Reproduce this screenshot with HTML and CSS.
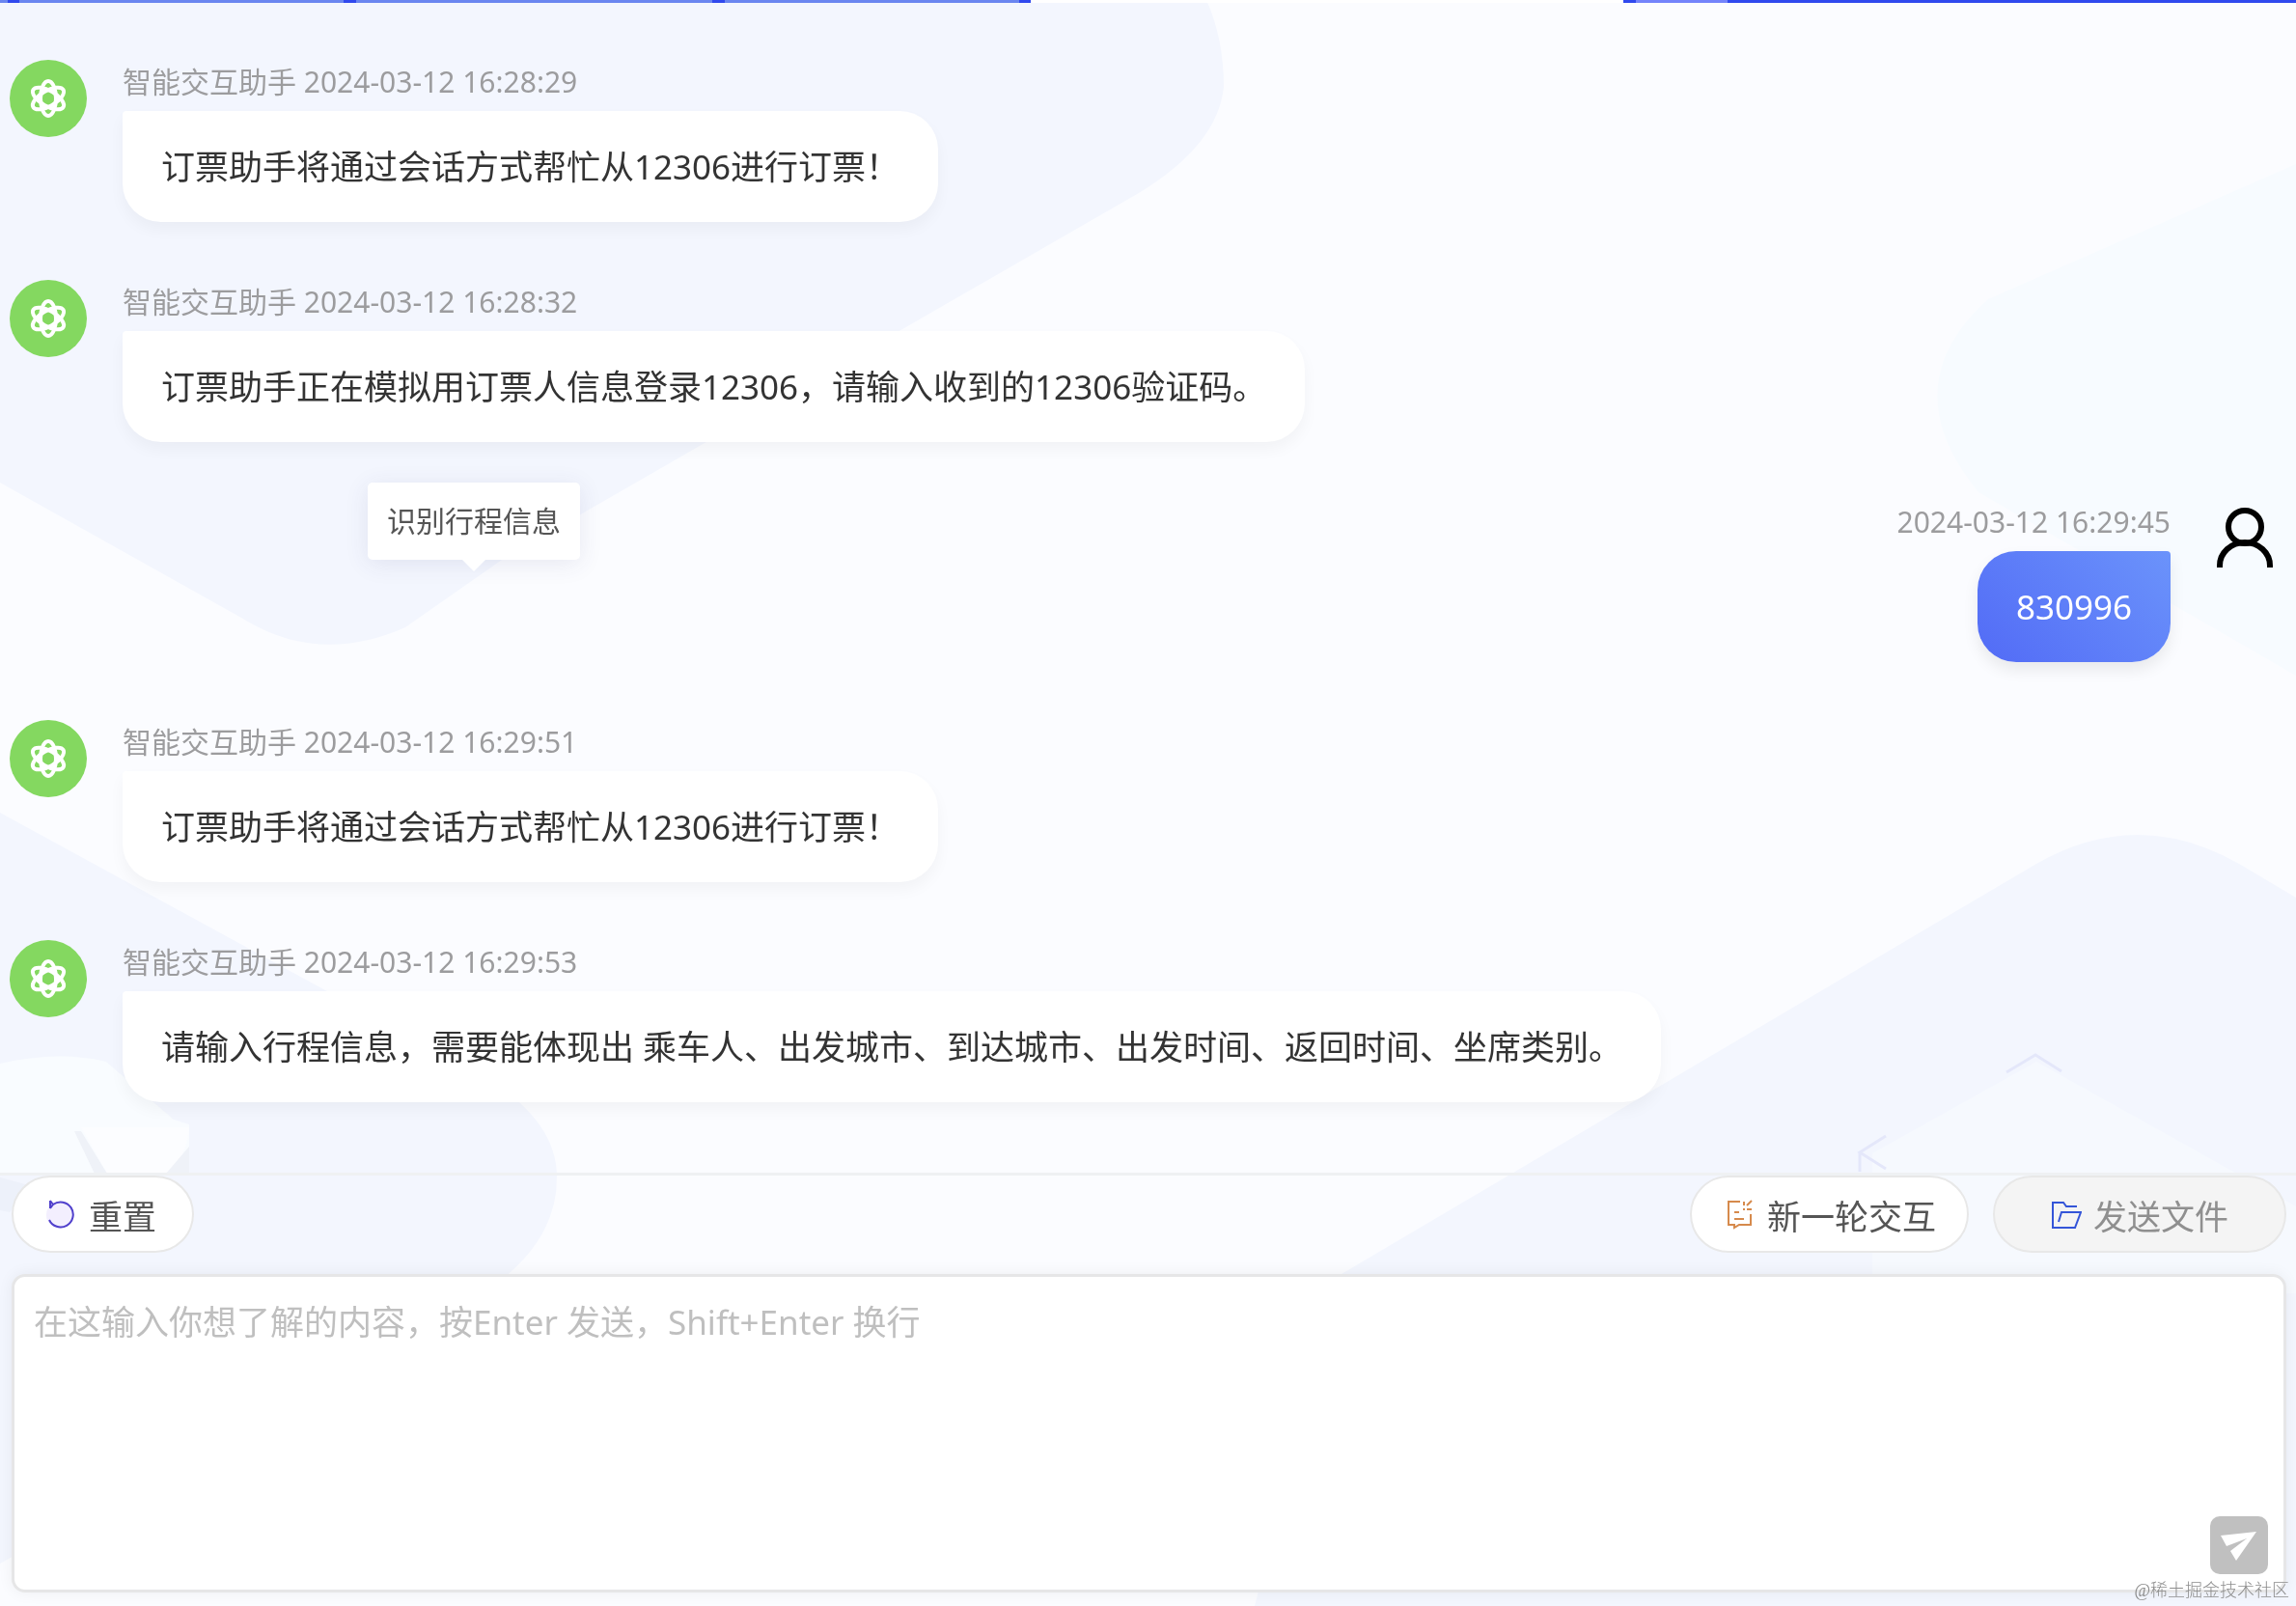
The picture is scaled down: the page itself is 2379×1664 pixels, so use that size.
FILE: index.html
```html
<!DOCTYPE html>
<html lang="zh-CN">
<head>
    <meta charset="UTF-8">
    <meta name="viewport" content="width=device-width, initial-scale=1.0">
    <title>智能交互助手</title>
    <link rel="stylesheet" href="styles.css">
</head>
<body>
    <!-- 背景装饰 -->
    <svg class="page-bg" viewBox="0 0 2379 1664" preserveAspectRatio="none" aria-hidden="true">
        <path fill="#f3f6fe" d="M0 0H1250Q1268 40 1268 90Q1262 150 1180 200L520 580L420 650Q330 690 250 640L0 500Z"/>
        <path fill="#f7fbff" d="M2379 170L2060 310Q1960 400 2050 510L2379 700Z"/>
        <path fill="#f3f6fe" d="M0 842L500 1115Q577 1160 577 1220Q577 1290 500 1340L0 1620Z"/>
        <path fill="#f3f6fe" d="M1390 1320L2110 895Q2215 835 2320 895L2379 930V1664H1300Z"/>
        <path fill="#f6f9fe" d="M2110 1100L2379 1250V1340H1940V1195Z"/>
        <path fill="none" stroke="#e4e7fa" stroke-width="3" d="M2079 1111L2109 1093L2136 1110M1954 1177L1927 1194L1954 1211M1927 1194V1214"/>
        <path fill="#f9fcff" d="M0 1102Q60 1088 110 1100L180 1160L196 1165V1216H0Z"/>
        <path fill="#fcfdff" d="M84 1168H196Q194 1200 172 1216H111Z"/>
        <path fill="#eff2f8" d="M77 1172L98 1216H111L84 1172ZM196 1188V1216H172Z"/>
        <path fill="#edf1fa" d="M0 1220L30 1228L10 1256L0 1254Z"/>
    </svg>

    <div class="chat-page">
        <div class="top-strip">
            <i class="tab"></i><i class="line"></i><i class="tab"></i><i class="line"></i><i class="tab"></i><i class="line"></i><i class="tab"></i><i class="line"></i><i class="active"></i><i class="line"></i><i class="tab light"></i><i class="line"></i>
        </div>

        <svg width="0" height="0" class="symbols" aria-hidden="true">
            <symbol id="bot" viewBox="0 0 80 80">
                <g fill="none" stroke="#fff" stroke-width="4">
                    <ellipse cx="40" cy="40" rx="8" ry="18"/>
                    <ellipse cx="40" cy="40" rx="8" ry="18" transform="rotate(60 40 40)"/>
                    <ellipse cx="40" cy="40" rx="8" ry="18" transform="rotate(120 40 40)"/>
                </g>
            </symbol>
        </svg>

        <main class="messages">
            <div class="message">
                <svg class="avatar bot"><use href="#bot"/></svg>
                <div class="content">
                    <div class="meta">智能交互助手 2024-03-12 16:28:29</div>
                    <div class="bubble">订票助手将通过会话方式帮忙从12306进行订票！</div>
                </div>
            </div>
            <div class="message">
                <svg class="avatar bot"><use href="#bot"/></svg>
                <div class="content">
                    <div class="meta">智能交互助手 2024-03-12 16:28:32</div>
                    <div class="bubble">订票助手正在模拟用订票人信息登录12306，请输入收到的12306验证码。</div>
                </div>
            </div>
            <div class="message user">
                <svg class="avatar" viewBox="0 0 80 80">
                    <g fill="none" stroke="#000" stroke-width="6">
                        <circle cx="40" cy="28" r="17"/>
                        <path d="M14 70V68A26 24 0 0 1 66 68V70"/>
                    </g>
                </svg>
                <div class="content">
                    <div class="meta">2024-03-12 16:29:45</div>
                    <div class="bubble">830996</div>
                </div>
                <div class="tooltip" role="tooltip">识别行程信息</div>
            </div>
            <div class="message">
                <svg class="avatar bot"><use href="#bot"/></svg>
                <div class="content">
                    <div class="meta">智能交互助手 2024-03-12 16:29:51</div>
                    <div class="bubble">订票助手将通过会话方式帮忙从12306进行订票！</div>
                </div>
            </div>
            <div class="message">
                <svg class="avatar bot"><use href="#bot"/></svg>
                <div class="content">
                    <div class="meta">智能交互助手 2024-03-12 16:29:53</div>
                    <div class="bubble">请输入行程信息，需要能体现出 乘车人、出发城市、到达城市、出发时间、返回时间、坐席类别。</div>
                </div>
            </div>
        </main>

        <footer class="composer">
            <div class="toolbar">
                <button class="tool-btn reset" type="button">
                    <svg class="icon" viewBox="0 0 32 32">
                        <circle cx="14" cy="17" r="14" fill="#f3effe"/>
                        <path fill="none" stroke="#5040cc" stroke-width="2" d="M4 2V10M4 10L7 6A13 13 0 1 1 3 22M4 2L7 6"/>
                    </svg>
                    重置
                </button>
                <button class="tool-btn push" type="button">
                    <svg class="icon" viewBox="0 0 32 32" fill="none" stroke="#d68a4c" stroke-width="2">
                        <path d="M16 3H4V27H10V30L15 27H27V16M10 14H15M10 21H20M20 3V7M28 2L23 7M23 11H28M20 10V12"/>
                    </svg>
                    新一轮交互
                </button>
                <button class="tool-btn send-file" type="button" disabled>
                    <svg class="icon" viewBox="0 0 32 32" fill="none" stroke="#3455d8" stroke-width="2">
                        <path d="M27 8H16L13 4H2V30H25L31 14H11L8 24"/>
                    </svg>
                    发送文件
                </button>
            </div>
            <div class="input-box">
                <textarea aria-label="输入内容" placeholder="在这输入你想了解的内容，按Enter 发送，Shift+Enter 换行"></textarea>
                <button class="send-btn" type="button" aria-label="发送">
                    <svg viewBox="0 0 60 60"><path fill="#fff" d="M11 20L48 16L27 46L21 36L38 23L17 31Z"/></svg>
                </button>
            </div>
        </footer>
        <div class="watermark">@稀土掘金技术社区</div>
    </div>
</body>
</html>
```
FILE: styles.css
```css
* {
    box-sizing: border-box;
}

body {
    margin: 0;
    background: #fbfcff;
    color: #333;
    font-family: "Noto Sans", "Noto Sans CJK SC", sans-serif;
    font-size: 35px;
}

button,
textarea {
    font: inherit;
}

.page-bg {
    position: fixed;
    inset: 0;
    z-index: -1;
    width: 100%;
    height: 100%;
}

.chat-page {
    position: relative;
    display: flex;
    flex-direction: column;
    min-height: 100vh;
}

/* 顶部标签条 */
.top-strip {
    display: grid;
    grid-template-columns: 8fr 12fr 336fr 13fr 369fr 13fr 305fr 12fr 614fr 13fr 95fr 589fr;
    height: 3px;
}

.tab {
    background: #6a86f0;
}

.tab.light {
    background: #7484fb;
}

.line {
    background: #3049ee;
}

.active {
    background: #fff;
}

.symbols {
    position: absolute;
}

/* 消息列表 */
.messages {
    flex: 1;
    display: flex;
    flex-direction: column;
    gap: 60px;
    padding: 59px 13px 60px 10px;
}

.message {
    position: relative;
    display: flex;
    align-items: flex-start;
    gap: 37px;
}

.message.user {
    flex-direction: row-reverse;
}

.avatar {
    width: 80px;
    height: 80px;
    flex: none;
}

.avatar.bot {
    border-radius: 50%;
    background: #84d860;
}

.content {
    display: flex;
    flex-direction: column;
    align-items: flex-start;
}

.user .content {
    align-items: flex-end;
}

.meta {
    height: 53px;
    line-height: 46px;
    font-size: 30px;
    color: #9c9c9e;
}

.bubble {
    padding: 30px 40px;
    line-height: 55px;
    border-radius: 4px 40px 40px 40px;
    background: #fff;
    box-shadow: 0 8px 16px rgba(0, 0, 0, 0.04);
}

.user .bubble {
    border-radius: 40px 4px 40px 40px;
    background: linear-gradient(45deg, #526bf6, #6b93fb);
    color: #fff;
    box-shadow: 0 8px 16px rgba(0, 0, 0, 0.08);
}

.tooltip {
    position: absolute;
    left: 371px;
    top: -18px;
    padding: 0 20px;
    line-height: 80px;
    font-size: 30px;
    color: #555;
    background: #fff;
    border-radius: 5px;
    box-shadow: 0 4px 24px rgba(60, 60, 120, 0.1);
}

.tooltip::after {
    content: "";
    position: absolute;
    left: 50%;
    top: 100%;
    transform: translateX(-50%);
    border: 12px solid transparent;
    border-top-color: #fff;
    border-bottom: none;
}

/* 底部输入区 */
.composer {
    display: flex;
    flex-direction: column;
    gap: 22px;
    padding: 0 10px 14px 12px;
    border-top: 3px solid #eff1f3;
}

.toolbar {
    display: flex;
    gap: 25px;
}

.tool-btn {
    display: flex;
    align-items: center;
    gap: 12px;
    height: 80px;
    padding: 0 32px 0 34px;
    border: 2px solid #e8e8e8;
    border-radius: 40px;
    background: #fff;
    color: #555;
}

.reset {
    padding-right: 37px;
}

.push {
    margin-left: auto;
}

.send-file {
    padding: 0 58px;
    background: #f4f4f4;
    color: #8f8f8f;
}

.icon {
    width: 32px;
    height: 32px;
}

.input-box {
    position: relative;
    display: flex;
}

textarea {
    flex: 1;
    height: 330px;
    padding: 20px;
    border: 3px solid #e6e6e7;
    border-radius: 14px;
    outline: none;
    resize: none;
    line-height: 54px;
    color: #333;
    background: #fff;
    box-shadow: 0 0 16px rgba(0, 0, 0, 0.06);
}

textarea::placeholder {
    color: #bfbfbf;
    opacity: 1;
}

.send-btn {
    position: absolute;
    right: 19px;
    bottom: 19px;
    width: 60px;
    height: 60px;
    padding: 0;
    border: none;
    border-radius: 10px;
    background: #c0c0c0;
}

.send-btn svg {
    display: block;
}

.watermark {
    position: absolute;
    right: 7px;
    bottom: 4px;
    font-family: "Liberation Serif", "Noto Sans CJK SC", serif;
    font-size: 18px;
    font-weight: 300;
    line-height: 24px;
    color: #8c8c8c;
}
```
